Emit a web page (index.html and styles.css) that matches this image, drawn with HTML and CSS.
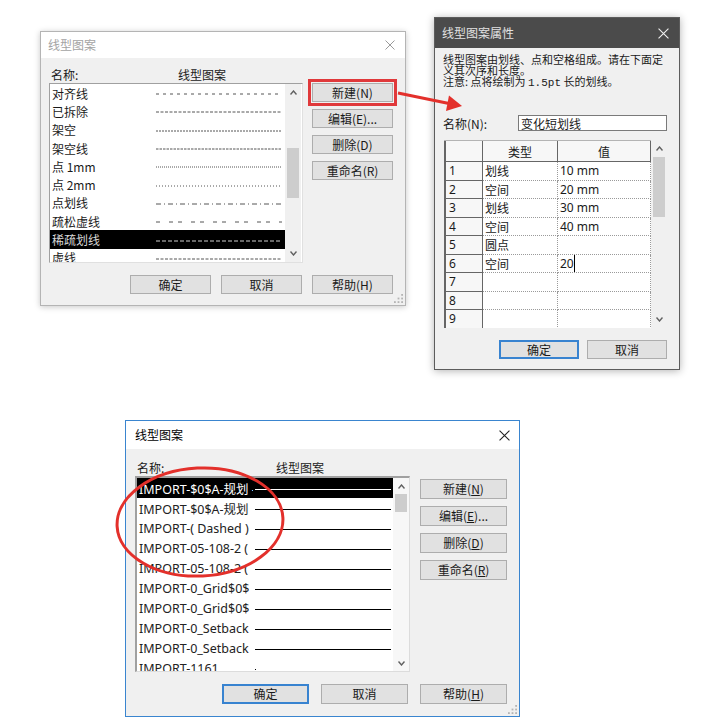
FILE: index.html
```html
<!DOCTYPE html>
<html lang="zh">
<head>
<meta charset="utf-8">
<title>线型图案</title>
<link rel="stylesheet" href="styles.css">
</head>
<body>
<div class="canvas">

  <!-- Window 1 -->
  <div class="win w1">
    <div class="title"><span>线型图案</span><svg class="x" viewBox="0 0 10 10"><path d="M0.5 0.5L9.5 9.5M9.5 0.5L0.5 9.5"/></svg></div>
    <div class="body">
      <div class="main">
        <div class="col">
          <div class="hdr"><span class="h-name">名称:</span><span>线型图案</span></div>
          <div class="list">
            <div class="rows">
              <div class="row"><span class="nm">对齐线</span><svg class="pat"><line x1="0" y1="10" x2="126" y2="10" stroke-dasharray="3 4"/></svg></div>
              <div class="row"><span class="nm">已拆除</span><svg class="pat"><line x1="0" y1="10" x2="126" y2="10" stroke-dasharray="3 1.5"/></svg></div>
              <div class="row"><span class="nm">架空</span><svg class="pat"><line x1="0" y1="10" x2="126" y2="10" stroke-dasharray="2 1"/></svg></div>
              <div class="row"><span class="nm">架空线</span><svg class="pat"><line x1="0" y1="10" x2="126" y2="10" stroke-dasharray="2.5 1"/></svg></div>
              <div class="row"><span class="nm">点 1mm</span><svg class="pat"><line x1="0" y1="10" x2="126" y2="10" stroke-dasharray="1 1"/></svg></div>
              <div class="row"><span class="nm">点 2mm</span><svg class="pat"><line x1="0" y1="10" x2="126" y2="10" stroke-dasharray="1 2"/></svg></div>
              <div class="row"><span class="nm">点划线</span><svg class="pat"><line x1="0" y1="10" x2="126" y2="10" stroke-dasharray="5 3 1 3"/></svg></div>
              <div class="row"><span class="nm">疏松虚线</span><svg class="pat"><line x1="0" y1="10" x2="126" y2="10" stroke-dasharray="4 9 4 5"/></svg></div>
              <div class="row sel"><span class="nm">稀疏划线</span><svg class="pat"><line x1="0" y1="10" x2="126" y2="10" stroke-dasharray="4 2"/></svg></div>
              <div class="row"><span class="nm">虚线</span><svg class="pat"><line x1="0" y1="10" x2="126" y2="10" stroke-dasharray="3 1.5"/></svg></div>
            </div>
            <div class="sb">
              <div class="arr"><svg viewBox="0 0 7 5"><polyline points="0.5,4.5 3.5,1 6.5,4.5"/></svg></div>
              <div class="thumb t1"></div>
              <div class="arr bot"><svg viewBox="0 0 7 5"><polyline points="0.5,0.5 3.5,4 6.5,0.5"/></svg></div>
            </div>
          </div>
        </div>
        <div class="side">
          <div class="btn hl">新建(N)</div>
          <div class="btn">编辑(E)...</div>
          <div class="btn">删除(D)</div>
          <div class="btn">重命名(R)</div>
        </div>
      </div>
      <div class="foot">
        <div class="btn">确定</div>
        <div class="btn">取消</div>
        <div class="btn">帮助(H)</div>
      </div>
    </div>
    <svg class="grip" viewBox="0 0 10 10"><rect x="8" y="0" width="2" height="2"/><rect x="8" y="4" width="2" height="2"/><rect x="4" y="4" width="2" height="2"/><rect x="8" y="8" width="2" height="2"/><rect x="4" y="8" width="2" height="2"/><rect x="0" y="8" width="2" height="2"/></svg>
  </div>

  <!-- Window 2 -->
  <div class="win w2">
    <div class="title"><span>线型图案属性</span><svg class="x" viewBox="0 0 10 10"><path d="M0.5 0.5L9.5 9.5M9.5 0.5L0.5 9.5"/></svg></div>
    <div class="body">
      <div class="desc">线型图案由划线、点和空格组成。请在下面定<br>义其次序和长度。<br>注意: 点将绘制为 <span class="mono">1.5pt</span> 长的划线。</div>
      <div class="name"><span class="lbl">名称(N):</span><div class="inp">变化短划线</div></div>
      <div class="grid">
        <div class="tbl">
          <div class="hd first"></div><div class="hd">类型</div><div class="hd">值</div>
          <div class="n">1</div><div class="c">划线</div><div class="c v">10 mm</div>
          <div class="n">2</div><div class="c">空间</div><div class="c v">20 mm</div>
          <div class="n">3</div><div class="c">划线</div><div class="c v">30 mm</div>
          <div class="n">4</div><div class="c">空间</div><div class="c v">40 mm</div>
          <div class="n">5</div><div class="c">圆点</div><div class="c v"></div>
          <div class="n">6</div><div class="c">空间</div><div class="c v"><span class="caret">20</span></div>
          <div class="n">7</div><div class="c"></div><div class="c v"></div>
          <div class="n">8</div><div class="c"></div><div class="c v"></div>
          <div class="n">9</div><div class="c"></div><div class="c v"></div>
        </div>
        <div class="sb">
          <div class="arr"><svg viewBox="0 0 7 5"><polyline points="0.5,4.5 3.5,1 6.5,4.5"/></svg></div>
          <div class="thumb t2"></div>
          <div class="arr bot"><svg viewBox="0 0 7 5"><polyline points="0.5,0.5 3.5,4 6.5,0.5"/></svg></div>
        </div>
      </div>
      <div class="foot">
        <div class="btn def">确定</div>
        <div class="btn">取消</div>
      </div>
    </div>
  </div>

  <!-- Window 3 -->
  <div class="win w3">
    <div class="title"><span>线型图案</span><svg class="x" viewBox="0 0 10 10"><path d="M0.5 0.5L9.5 9.5M9.5 0.5L0.5 9.5"/></svg></div>
    <div class="body">
      <div class="main">
        <div class="col">
          <div class="hdr"><span class="h-name">名称:</span><span>线型图案</span></div>
          <div class="list">
            <div class="rows">
              <div class="row sel"><span class="nm">IMPORT-$0$A-规划 -</span><span class="ln"></span></div>
              <div class="row"><span class="nm">IMPORT-$0$A-规划</span><span class="ln"></span></div>
              <div class="row"><span class="nm">IMPORT-( Dashed )</span><span class="ln"></span></div>
              <div class="row"><span class="nm">IMPORT-05-108-2 (</span><span class="ln"></span></div>
              <div class="row"><span class="nm">IMPORT-05-108-2 (</span><span class="ln"></span></div>
              <div class="row"><span class="nm">IMPORT-0_Grid$0$</span><span class="ln"></span></div>
              <div class="row"><span class="nm">IMPORT-0_Grid$0$</span><span class="ln"></span></div>
              <div class="row"><span class="nm">IMPORT-0_Setback</span><span class="ln"></span></div>
              <div class="row"><span class="nm">IMPORT-0_Setback</span><span class="ln"></span></div>
              <div class="row"><span class="nm">IMPORT-1161</span><span class="dot"></span></div>
            </div>
            <div class="sb">
              <div class="arr"><svg viewBox="0 0 7 5"><polyline points="0.5,4.5 3.5,1 6.5,4.5"/></svg></div>
              <div class="thumb t3"></div>
              <div class="arr bot"><svg viewBox="0 0 7 5"><polyline points="0.5,0.5 3.5,4 6.5,0.5"/></svg></div>
            </div>
          </div>
        </div>
        <div class="side">
          <div class="btn">新建(<u>N</u>)</div>
          <div class="btn">编辑(<u>E</u>)...</div>
          <div class="btn">删除(<u>D</u>)</div>
          <div class="btn">重命名(<u>R</u>)</div>
        </div>
      </div>
      <div class="foot">
        <div class="btn def">确定</div>
        <div class="btn">取消</div>
        <div class="btn">帮助(<u>H</u>)</div>
      </div>
    </div>
    <svg class="grip" viewBox="0 0 10 10"><rect x="8" y="0" width="2" height="2"/><rect x="8" y="4" width="2" height="2"/><rect x="4" y="4" width="2" height="2"/><rect x="8" y="8" width="2" height="2"/><rect x="4" y="8" width="2" height="2"/><rect x="0" y="8" width="2" height="2"/></svg>
  </div>

  <!-- annotations -->
  <svg class="notes" viewBox="0 0 705 728">
    <line x1="398" y1="93" x2="449" y2="103.5" class="stroke"/>
    <polygon points="462,106 446,111 449,95.5" class="fillred"/>
    <ellipse cx="200" cy="522" rx="83" ry="54" transform="rotate(-3 200 522)" class="stroke"/>
  </svg>
</div>
</body>
</html>
```

FILE: styles.css
```css
* { box-sizing: border-box; }
html, body { margin: 0; padding: 0; background: #fff; }
body {
  font-family: "Noto Sans CJK SC", "Noto Sans", sans-serif;
  font-size: 12px;
  color: #1a1a1a;
}
.canvas { position: relative; width: 705px; height: 728px; overflow: hidden; }

.win { position: absolute; display: flex; flex-direction: column; background: #f0f0f0; }
.title { display: flex; align-items: center; justify-content: space-between; flex: none; line-height: 1; }
.x { width: 10px; height: 10px; fill: none; stroke-width: 1; }

.btn {
  height: 19px; display: flex; align-items: center; justify-content: center;
  background: #e1e1e1; border: 1px solid #adadad; font-size: 12px; color: #1a1a1a;
  line-height: 1; white-space: nowrap; flex: none;
}
.btn.def { border: 2px solid #3883d0; }

.sb { flex: none; width: 16px; display: flex; flex-direction: column; background: #f0f0f0; }
.sb .arr { height: 17px; display: flex; align-items: center; justify-content: center; flex: none; }
.sb .arr.bot { margin-top: auto; }
.sb .arr svg { width: 7px; height: 5px; fill: none; stroke: #606060; stroke-width: 1.4; }
.sb .thumb { background: #cdcdcd; margin: 0 2px; flex: none; }

.grip { position: absolute; right: 2px; bottom: 2px; width: 9px; height: 9px; fill: #b4b4b4; }

/* ---------- Window 1 ---------- */
.w1 { left: 40px; top: 31px; width: 366px; height: 275px; border: 1px solid #b4b4b4; box-shadow: 0 1px 6px rgba(0,0,0,.22); }
.w1 .title { height: 26px; background: #fff; padding: 0 10px 0 7px; color: #a3a3a3; }
.w1 .x { stroke: #9a9a9a; }
.w1 .body { flex: 1; display: flex; flex-direction: column; padding: 8px 12px 11px 8px; }
.w1 .main { display: flex; gap: 9px; }
.w1 .col { width: 254px; display: flex; flex-direction: column; }
.w1 .hdr { height: 17px; display: flex; align-items: center; }
.w1 .h-name { padding-left: 2px; width: 129px; }
.w1 .list {
  height: 180px; display: flex; background: #fff;
  border: 1px solid #e0e0e0; border-top-color: #a0a0a0; border-left-color: #a0a0a0;
}
.w1 .rows { flex: 1; overflow: hidden; }
.w1 .row { height: 18.3px; display: flex; align-items: center; white-space: nowrap; }
.w1 .nm { width: 106px; padding-left: 2px; flex: none; }
.w1 .pat { width: 126px; height: 18px; flex: none; stroke: #555; stroke-width: 1; }
.w1 .row.sel { background: #000; color: #d8d8d8; }
.w1 .row.sel .pat { stroke: #d0d0d0; }
.w1 .sb { margin-right: 1px; }
.w1 .t1 { margin-top: 47px; height: 50px; }
.w1 .side { width: 81px; display: flex; flex-direction: column; gap: 7px; padding-top: 17px; }
.w1 .btn { width: 81px; }
.w1 .hl { outline: 3px solid #e0393b; outline-offset: 1px; }
.w1 .foot { margin-top: 12px; display: flex; gap: 10px; justify-content: flex-end; }

/* ---------- Window 2 ---------- */
.w2 { left: 434px; top: 17px; width: 246px; height: 353px; border: 1px solid #5c5c5c; box-shadow: 0 1px 8px rgba(0,0,0,.3); }
.w2 .title { height: 30px; background: #4b4b4b; color: #e2e2e2; padding: 0 10px 0 7px; }
.w2 .x { stroke: #f0f0f0; width: 11px; height: 11px; }
.w2 .body { flex: 1; display: flex; flex-direction: column; padding: 6px 12px 0 8px; }
.w2 .desc { font-size: 11px; line-height: 11px; white-space: nowrap; height: 33px; }
.w2 .mono { font-family: "Liberation Mono", monospace; font-size: 11px; }
.w2 .name { margin-top: 28px; height: 16px; display: flex; align-items: center; }
.w2 .lbl { width: 75px; flex: none; }
.w2 .inp { flex: 1; height: 16px; background: #fff; border: 1px solid #7a7a7a; padding-left: 2px; display: flex; align-items: center; }
.w2 .grid { margin-top: 9px; margin-left: 1px; height: 188px; display: flex; background: #fff; }
.w2 .tbl {
  display: grid; grid-template-columns: 39px 75px 93px; grid-template-rows: 21px repeat(9, 18.5px);
  border-top: 1px solid #b4b4b4; overflow: hidden;
}
.w2 .hd, .w2 .n, .w2 .c { display: flex; align-items: center; white-space: nowrap; }
.w2 .hd { background: #f7f7f7; border-right: 1px solid #666; border-bottom: 1px solid #666; justify-content: center; }
.w2 .hd.first { border-left: 2px solid #666; }
.w2 .n { background: #f7f7f7; border-left: 2px solid #666; border-right: 1px solid #666; border-bottom: 1px solid #666; padding-left: 3px; font-family: "Noto Sans", sans-serif; }
.w2 .c { background: #fff; border-right: 1px dotted #9a9a9a; border-bottom: 1px dotted #9a9a9a; padding-left: 2px; }
.w2 .c.v { font-family: "Noto Sans", sans-serif; }
.w2 .caret { border-right: 1px solid #000; padding-right: 0; }
.w2 .t2 { height: 60px; }
.w2 .foot { margin-top: 12px; display: flex; gap: 8px; justify-content: flex-end; }
.w2 .btn { width: 80px; }

/* ---------- Window 3 ---------- */
.w3 { left: 125px; top: 420px; width: 395px; height: 297px; border: 1px solid #3a85cf; }
.w3 .title { height: 28px; background: #fff; color: #000; padding: 0 9px 0 9px; }
.w3 .x { stroke: #222; width: 11px; height: 11px; }
.w3 .body { flex: 1; display: flex; flex-direction: column; padding: 10px 12px 12px 9px; }
.w3 .main { display: flex; gap: 10px; }
.w3 .col { width: 275px; display: flex; flex-direction: column; }
.w3 .hdr { height: 17px; display: flex; align-items: center; }
.w3 .h-name { padding-left: 2px; width: 141px; }
.w3 .list {
  height: 196px; display: flex; background: #fff;
  border: 1px solid #dcdcdc; border-top: 2px solid #a0a0a0; border-left: 2px solid #a0a0a0;
}
.w3 .rows { flex: 1; overflow: hidden; font-family: "Noto Sans", "Noto Sans CJK SC", sans-serif; font-size: 12.5px; color: #222; }
.w3 .row { height: 20px; display: flex; align-items: center; }
.w3 .nm { width: 116px; padding-left: 2px; overflow: hidden; white-space: nowrap; flex: none; }
.w3 .ln { flex: 1; height: 1px; background: #000; margin: 2px 2px 0 2px; }
.w3 .dot { width: 1px; height: 1px; background: #000; margin: 2px 0 0 2px; }
.w3 .row.sel { background: #000; color: #fff; }
.w3 .row.sel .ln { background: #fff; }
.w3 .sb { background: #f7f7f7; }
.w3 .sb .arr { height: 16px; }
.w3 .t3 { height: 18px; }
.w3 .side { width: 87px; display: flex; flex-direction: column; gap: 7px; padding-top: 20px; }
.w3 .btn { width: 87px; height: 20px; }
.w3 .foot { margin-top: 12px; display: flex; gap: 12px; justify-content: flex-end; }

/* ---------- annotations ---------- */
.notes { position: absolute; left: 0; top: 0; width: 705px; height: 728px; pointer-events: none; }
.notes .stroke { fill: none; stroke: #e3302b; stroke-width: 3; }
.notes .fillred { fill: #e3302b; }
```
